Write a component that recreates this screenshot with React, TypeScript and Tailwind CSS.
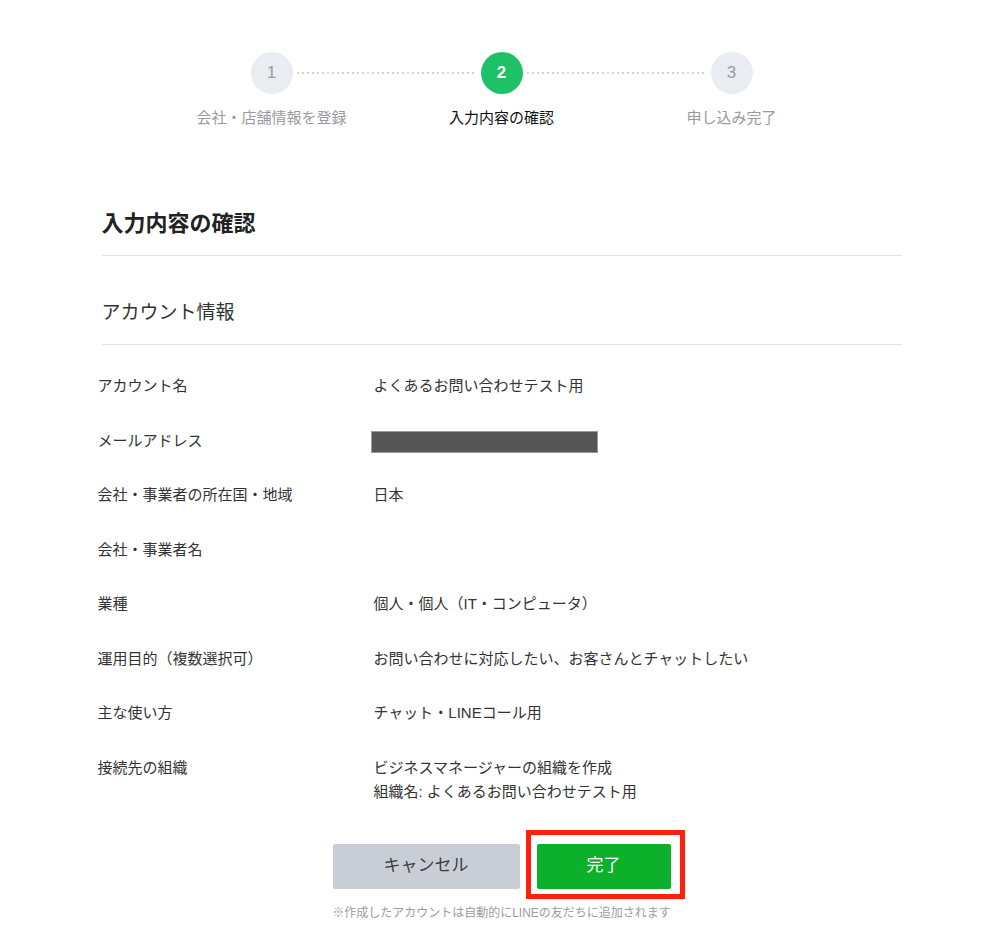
import React from "react";

const rows: { label: string; value: React.ReactNode }[] = [
  { label: "アカウント名", value: "よくあるお問い合わせテスト用" },
  {
    label: "メールアドレス",
    value: <span className="-ml-[3px] mt-[2px] block h-[22px] w-[227px] border border-[#9a9a9a] bg-[#555555]" />,
  },
  { label: "会社・事業者の所在国・地域", value: "日本" },
  { label: "会社・事業者名", value: "" },
  { label: "業種", value: "個人・個人（IT・コンピュータ）" },
  { label: "運用目的（複数選択可）", value: "お問い合わせに対応したい、お客さんとチャットしたい" },
  { label: "主な使い方", value: "チャット・LINEコール用" },
  {
    label: "接続先の組織",
    value: (
      <>
        <div>ビジネスマネージャーの組織を作成</div>
        <div>組織名: よくあるお問い合わせテスト用</div>
      </>
    ),
  },
];

const Dots = () => (
  <div className="mx-[4px] h-[2px] flex-1 bg-[linear-gradient(to_right,#d0d3d8_2px,transparent_2px)] bg-[length:5px_2px]" />
);

export default function App() {
  return (
    <div
      className="min-h-screen bg-white pt-[52px] text-[#333333]"
      style={{ fontFamily: '"Liberation Sans", "Noto Sans CJK JP", sans-serif' }}
    >
      {/* stepper */}
      <div className="mx-auto flex w-[502px] items-center">
        <div className="flex h-[42px] w-[42px] items-center justify-center rounded-full bg-[#e9ecf0] text-[17px] text-[#9a9da3]">
          1
        </div>
        <Dots />
        <div className="flex h-[42px] w-[42px] items-center justify-center rounded-full bg-[#1fc166] text-[17px] font-bold text-white">
          2
        </div>
        <Dots />
        <div className="flex h-[42px] w-[42px] items-center justify-center rounded-full bg-[#e9ecf0] text-[17px] text-[#9a9da3]">
          3
        </div>
      </div>
      <div className="mx-auto mt-[14px] grid w-[690px] grid-cols-3 text-center text-[15px] leading-5">
        <div className="text-[#979aa0]">会社・店舗情報を登録</div>
        <div className="text-[#111111]">入力内容の確認</div>
        <div className="text-[#979aa0]">申し込み完了</div>
      </div>

      {/* content */}
      <div className="mx-auto mt-[82px] w-[800px]">
        <h1 className="border-b border-[#e3e3e3] pb-[17px] text-[22px] leading-[28px] font-bold text-[#222222]">
          入力内容の確認
        </h1>
        <h2 className="mt-[44px] border-b border-[#e3e3e3] pb-[18px] text-[19px] leading-[26px] text-[#333333]">
          アカウント情報
        </h2>
        <div className="-ml-[4px] pt-[14px] text-[15px]">
          {rows.map((r) => (
            <div key={r.label} className="flex py-[15px] leading-[24.5px]">
              <div className="w-[276px] shrink-0">{r.label}</div>
              <div className="flex-1">{r.value}</div>
            </div>
          ))}
        </div>

        <div className="mt-[24px] flex justify-center gap-[17px]">
          <button className="h-[45px] w-[187px] rounded-[2px] bg-[#c9ced6] text-[17px] text-[#3a3d42]">
            キャンセル
          </button>
          <div className="relative">
            <button className="h-[45px] w-[134px] rounded-[2px] bg-[#0cb02a] text-[17px] text-white">
              完了
            </button>
            <span className="pointer-events-none absolute -top-[14px] -right-[14px] -bottom-[10px] -left-[11px] border-[5px] border-[#ff200e]" />
          </div>
        </div>
        <p className="mt-[16px] text-center text-[12px] leading-4 text-[#9a9da3]">
          ※作成したアカウントは自動的にLINEの友だちに追加されます
        </p>
      </div>
    </div>
  );
}
